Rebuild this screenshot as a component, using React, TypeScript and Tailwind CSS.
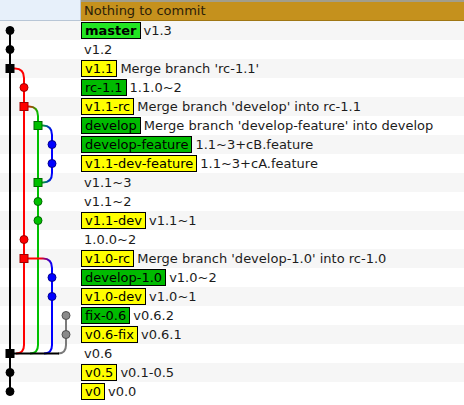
import React from 'react';

type Row = { label?: string; kind?: 'head' | 'branch' | 'tag'; text: string };

const rows: Row[] = [
    { label: 'master', kind: 'head', text: 'v1.3' },
    { text: 'v1.2' },
    { label: 'v1.1', kind: 'tag', text: "Merge branch 'rc-1.1'" },
    { label: 'rc-1.1', kind: 'branch', text: '1.1.0~2' },
    { label: 'v1.1-rc', kind: 'tag', text: "Merge branch 'develop' into rc-1.1" },
    { label: 'develop', kind: 'branch', text: "Merge branch 'develop-feature' into develop" },
    { label: 'develop-feature', kind: 'branch', text: '1.1~3+cB.feature' },
    { label: 'v1.1-dev-feature', kind: 'tag', text: '1.1~3+cA.feature' },
    { text: 'v1.1~3' },
    { text: 'v1.1~2' },
    { label: 'v1.1-dev', kind: 'tag', text: 'v1.1~1' },
    { text: '1.0.0~2' },
    { label: 'v1.0-rc', kind: 'tag', text: "Merge branch 'develop-1.0' into rc-1.0" },
    { label: 'develop-1.0', kind: 'branch', text: 'v1.0~2' },
    { label: 'v1.0-dev', kind: 'tag', text: 'v1.0~1' },
    { label: 'fix-0.6', kind: 'branch', text: 'v0.6.2' },
    { label: 'v0.6-fix', kind: 'tag', text: 'v0.6.1' },
    { text: 'v0.6' },
    { label: 'v0.5', kind: 'tag', text: 'v0.1-0.5' },
    { label: 'v0', kind: 'tag', text: 'v0.0' },
];

// [row, lane, square?, fill, stroke]
const BLACK = ['#000', '#000'];
const RED = ['#ff0000', '#a00000'];
const GREEN = ['#00c000', '#006800'];
const BLUE = ['#0000ff', '#000090'];
const GRAY = ['#8a8a8a', '#505050'];
const nodes: [number, number, boolean, string[]][] = [
    [0, 0, false, BLACK], [1, 0, false, BLACK], [2, 0, true, BLACK],
    [3, 1, false, RED], [4, 1, true, RED], [5, 2, true, GREEN],
    [6, 3, false, BLUE], [7, 3, false, BLUE], [8, 2, true, GREEN],
    [9, 2, false, GREEN], [10, 2, false, GREEN], [11, 1, false, RED],
    [12, 1, true, RED], [13, 3, false, BLUE], [14, 3, false, BLUE],
    [15, 4, false, GRAY], [16, 4, false, GRAY], [17, 0, true, BLACK],
    [18, 0, false, BLACK], [19, 0, false, BLACK],
];

const lx = (l: number) => 10 + 14 * l;
const ry = (r: number) => 9.5 + 19 * r;

const Graph = () => (
    <svg className="absolute left-0 top-0" width={81} height={380} viewBox="0 0 81 380" fill="none">
        <defs>
            <linearGradient id="rg" gradientUnits="userSpaceOnUse" x1="27" y1="0" x2="38" y2="0">
                <stop offset="0" stopColor="#ff0000" />
                <stop offset="1" stopColor="#00c000" />
            </linearGradient>
            <linearGradient id="gb" gradientUnits="userSpaceOnUse" x1="41" y1="0" x2="52" y2="0">
                <stop offset="0" stopColor="#00c000" />
                <stop offset="1" stopColor="#0000ff" />
            </linearGradient>
            <linearGradient id="bg" gradientUnits="userSpaceOnUse" x1="52" y1="0" x2="41" y2="0">
                <stop offset="0" stopColor="#0000ff" />
                <stop offset="1" stopColor="#00c000" />
            </linearGradient>
            <linearGradient id="rb" gradientUnits="userSpaceOnUse" x1="40" y1="0" x2="52" y2="0">
                <stop offset="0" stopColor="#ff0000" />
                <stop offset="1" stopColor="#0000ff" />
            </linearGradient>
        </defs>
        <g strokeWidth={2}>
            {/* lane 0 */}
            <path d="M10 9.5 V370.5" stroke="#000" />
            {/* red lane */}
            <path d="M10 47.5 H15 Q24 47.5 24 57 V324 Q24 332.5 16 332.5" stroke="#ff0000" />
            {/* green lane */}
            <path d="M24 85.5 H29 Q38 85.5 38 95" stroke="url(#rg)" />
            <path d="M38 95 V324 Q38 332.5 30 332.5" stroke="#00c000" />
            {/* feature branch */}
            <path d="M38 104.5 H43 Q52 104.5 52 114" stroke="url(#gb)" />
            <path d="M52 114 V152" stroke="#0000ff" />
            <path d="M52 152 Q52 161.5 43 161.5 H38" stroke="url(#bg)" />
            {/* develop-1.0 */}
            <path d="M24 237.5 H43 Q52 237.5 52 247" stroke="url(#rb)" />
            <path d="M52 247 V324 Q52 332.5 44 332.5" stroke="#0000ff" />
            {/* fix-0.6 */}
            <path d="M66 294.5 V324 Q66 332.5 58 332.5" stroke="#7a7a7a" />
            <path d="M10 332.5 H59" stroke="#000" />
        </g>
        {nodes.map(([r, l, sq, [fill, stroke]]) =>
            sq ? (
                <rect key={r} x={lx(l) - 4} y={ry(r) - 4} width={8} height={8} fill={fill} stroke={stroke} strokeWidth={1} />
            ) : (
                <circle key={r} cx={lx(l)} cy={ry(r)} r={4} fill={fill} stroke={stroke} strokeWidth={1} />
            )
        )}
    </svg>
);

const Label = ({ row }: { row: Row }) => (
    <span
        className={`inline-flex h-[17px] items-center border border-black px-[3px] leading-none text-black ${
            row.kind === 'head' ? 'bg-[#22e622] font-bold' : row.kind === 'branch' ? 'bg-[#00bb00]' : 'bg-[#ffff00]'
        }`}
    >
        {row.label}
    </span>
);

export default function App() {
    return (
        <div className="w-[464px] h-[405px] bg-white font-['DejaVu_Sans',sans-serif] text-[13px] text-[#1c1c1c] overflow-hidden">
            {/* Header */}
            <div className="flex h-[21px]">
                <div className="w-[81px] bg-[#e7f0fa] border-r border-b border-[#b8c6d6]" />
                <div className="flex-1 flex items-center pl-[3px] bg-[#c5911d] border-t-2 border-t-[#a29e8c] border-b border-b-[#9f7613] text-[#2b2008]">
                    Nothing to commit
                </div>
            </div>

            {/* Commit list */}
            <div className="relative">
                {rows.map((row, i) => (
                    <div key={i} className={`flex h-[19px] ${i % 2 === 0 ? 'bg-[#f6f6f6]' : 'bg-white'}`}>
                        <div className="w-[81px] shrink-0" />
                        <div className="flex items-center whitespace-nowrap">
                            {row.label ? (
                                <>
                                    <Label row={row} />
                                    <span className="ml-[3px]">{row.text}</span>
                                </>
                            ) : (
                                <span className="pl-[3px]">{row.text}</span>
                            )}
                        </div>
                    </div>
                ))}
                <Graph />
            </div>
        </div>
    );
}
